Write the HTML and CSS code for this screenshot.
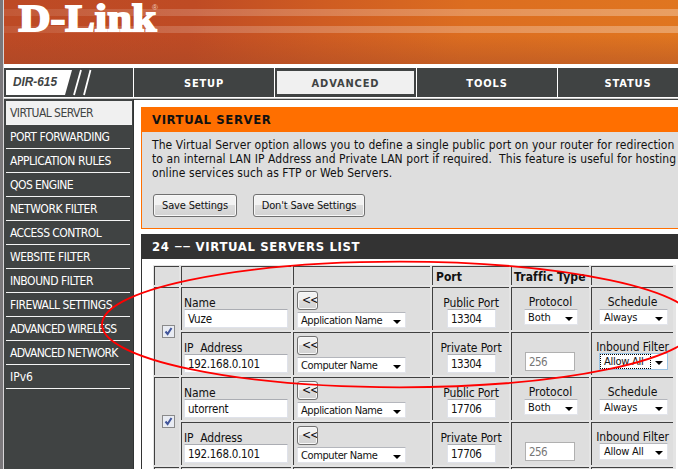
FILE: index.html
```html
<!DOCTYPE html>
<html lang="en">
<head>
<meta charset="utf-8">
<title>D-Link Virtual Server</title>
<link rel="stylesheet" href="styles.css">
</head>
<body>
<div class="page">
  <header class="banner">
    <svg class="logo" width="674" height="64" viewBox="4 0 674 64">
      <defs>
        <linearGradient id="stripe" x1="0" x2="1" y1="0" y2="0"><stop offset="0" stop-color="#fff" stop-opacity=".08"/><stop offset=".3" stop-color="#fff" stop-opacity=".19"/><stop offset="1" stop-color="#fff" stop-opacity=".3"/></linearGradient>
      </defs>
      <rect x="4" y="9" width="674" height="7" fill="url(#stripe)"/>
      <rect x="4" y="26" width="674" height="7" fill="url(#stripe)"/>
      <text class="brand" x="18.5" y="31.2" textLength="138" lengthAdjust="spacingAndGlyphs">D-Link</text>
      <text class="reg" x="152" y="9.5">®</text>
    </svg>
  </header>
  <nav class="tabs">
    <div class="model">
      <svg width="129" height="29" viewBox="0 0 129 29">
        <path d="M2 2H68L61 27H2Z" fill="#fff"/>
        <path d="M77 2L70 27M86.5 2L80 27" stroke="#fff" stroke-width="1.8"/>
        <text class="model-name" x="9" y="17.5" textLength="44" lengthAdjust="spacingAndGlyphs">DIR-615</text>
      </svg>
    </div>
    <a class="tab">SETUP</a>
    <a class="tab tab-on"><span>ADVANCED</span></a>
    <a class="tab tools">TOOLS</a>
    <a class="tab">STATUS</a>
  </nav>
  <div class="body">
    <aside class="side">
      <a class="on tight">VIRTUAL SERVER</a>
      <a>PORT FORWARDING</a>
      <a>APPLICATION RULES</a>
      <a class="tight">QOS ENGINE</a>
      <a>NETWORK FILTER</a>
      <a class="tight">ACCESS CONTROL</a>
      <a>WEBSITE FILTER</a>
      <a>INBOUND FILTER</a>
      <a>FIREWALL SETTINGS</a>
      <a class="tighter">ADVANCED WIRELESS</a>
      <a class="tighter">ADVANCED NETWORK</a>
      <a class="loose">IPv6</a>
    </aside>
    <main class="main">
      <section class="intro">
        <h1>VIRTUAL SERVER</h1>
        <p>The Virtual Server option allows you to define a single public port on your router for redirection<br>to an internal LAN IP Address and Private LAN port if required. &nbsp;This feature is useful for hosting<br>online services such as FTP or Web Servers.</p>
        <div class="actions"><button class="save">Save Settings</button><button class="dont">Don't Save Settings</button></div>
      </section>
      <section class="list">
        <h2>24 <span class="dash">––</span> VIRTUAL SERVERS LIST</h2>
        <div class="grid">
          <div class="cell"></div><div class="cell"></div><div class="cell"></div>
          <div class="cell head">Port</div><div class="cell head traffic">Traffic Type</div><div class="cell"></div>

          <div class="cell check"><i class="box"><svg width="9" height="9" viewBox="0 0 9 9"><path d="M1.5 4.5L3.6 7L7.5 1" fill="none" stroke="#41559b" stroke-width="2"/></svg></i></div>
          <div class="cell"><label>Name</label><div class="input">Vuze</div></div>
          <div class="cell pick"><button>&lt;&lt;</button><div class="select">Application Name</div></div>
          <div class="cell mid port"><label>Public Port</label><div class="input">13304</div></div>
          <div class="cell mid proto"><label>Protocol</label><div class="select">Both</div></div>
          <div class="cell mid sched"><label>Schedule</label><div class="select">Always</div></div>
          <div class="cell"><label class="ip">IP&nbsp; Address</label><div class="input num">192.168.0.101</div></div>
          <div class="cell pick"><button>&lt;&lt;</button><div class="select comp">Computer Name</div></div>
          <div class="cell mid port"><label>Private Port</label><div class="input">13304</div></div>
          <div class="cell mid number"><div class="input off">256</div></div>
          <div class="cell mid filter"><label>Inbound Filter</label><div class="select focus"><span>Allow All</span></div></div>

          <div class="cell check"><i class="box"><svg width="9" height="9" viewBox="0 0 9 9"><path d="M1.5 4.5L3.6 7L7.5 1" fill="none" stroke="#41559b" stroke-width="2"/></svg></i></div>
          <div class="cell"><label>Name</label><div class="input">utorrent</div></div>
          <div class="cell pick"><button>&lt;&lt;</button><div class="select">Application Name</div></div>
          <div class="cell mid port"><label>Public Port</label><div class="input">17706</div></div>
          <div class="cell mid proto"><label>Protocol</label><div class="select">Both</div></div>
          <div class="cell mid sched"><label>Schedule</label><div class="select">Always</div></div>
          <div class="cell"><label class="ip">IP&nbsp; Address</label><div class="input num">192.168.0.101</div></div>
          <div class="cell pick"><button>&lt;&lt;</button><div class="select comp">Computer Name</div></div>
          <div class="cell mid port"><label>Private Port</label><div class="input">17706</div></div>
          <div class="cell mid number"><div class="input off">256</div></div>
          <div class="cell mid filter"><label>Inbound Filter</label><div class="select"><span>Allow All</span></div></div>

          <div class="cell"></div><div class="cell"></div><div class="cell"></div><div class="cell"></div><div class="cell"></div><div class="cell"></div>
        </div>
      </section>
    </main>
  </div>
  <svg class="mark" width="678" height="469" viewBox="0 0 678 469"><ellipse cx="399.5" cy="324.5" rx="297.5" ry="62.8" fill="none" stroke="#f00" stroke-width="1.8"/></svg>
</div>
</body>
</html>
```
FILE: styles.css
```css
* { box-sizing: border-box; }
body { margin: 0; background: #fff; }
.page {
  position: relative; width: 678px; height: 469px; overflow: hidden;
  border-left: 3px solid #7b787b; padding-left: 1px;
  background: linear-gradient(90deg, #d8d6d8 1px, #fff 1px);
  font-family: "DejaVu Sans Condensed", "DejaVu Sans", sans-serif; font-stretch: condensed;
  font-size: 12px; color: #111;
}
.banner {
  height: 64px;
  background:
    linear-gradient(180deg, rgba(160,70,40,0) 55%, rgba(160,70,40,.4) 100%),
    linear-gradient(98deg, #bd4a25 0%, #bf4b24 28%, #cf5c22 47%, #dc6d20 68%, #e07620 100%);
}
.logo { display: block; }
.brand { font: bold 38px "Liberation Serif", serif; fill: #fff; stroke: #fff; stroke-width: 1.8px; }
.reg { font: 8px "Liberation Sans", sans-serif; fill: #f0cdbd; }
.tabs {
  display: grid; grid-template-columns: 129px 140px 141px 140px 140px; column-gap: 1px;
  height: 29px; margin-top: 4px;
}
.model, .tab { background: #404343; }
.model svg { display: block; }
.model-name { font: italic bold 12px "Liberation Sans", sans-serif; fill: #404343; }
.tab {
  display: flex; align-items: center; justify-content: center;
  font-weight: bold; font-size: 11px; letter-spacing: .85px; color: #fff; padding-top: 1px;
}
.tab-on { padding: 3px 2px; color: #404343; }
.tab-on span { flex: 1; height: 23px; line-height: 25px; background: #f0f0f0; text-align: center; }
.body {
  display: flex; height: 372px; margin-top: 1px; border-top: 1px solid #c8c8c8;
  background: linear-gradient(#404343 1px, transparent 1px);
}
.side { width: 130px; background: #404343; padding: 2px 3px 0 2px; border-right: 1px solid #303333; }
.side a { display: block; height: 24px; border-bottom: 1px solid #f4f4f4; color: #fff; line-height: 25px; padding-left: 4px; white-space: nowrap; letter-spacing: -.45px; }
.side .on { background: #f0f0f0; color: #404343; margin-right: -2px; }
.side .tight { letter-spacing: -.55px; }
.side .tighter { letter-spacing: -.7px; }
.side .loose { letter-spacing: 0; }
.main { flex: 1; padding: 8px 0 0 7px; min-width: 0; }
.intro { height: 122px; width: 600px; border: 1px solid #ff6f00; background: #dedede; }
h1, h2 { margin: 0; height: 25px; padding-left: 10px; font-weight: bold; font-size: 13px; line-height: 26px; letter-spacing: .6px; white-space: nowrap; }
h1 { background: #ff6f00; color: #111; margin-top: -1px; }
p { margin: 6px 0 0 10px; line-height: 14px; white-space: nowrap; letter-spacing: .08px; }
.actions { display: flex; gap: 16px; margin: 14px 0 0 11px; }
button {
  height: 23px; padding: 0; border: 1px solid #707070; border-radius: 3px; color: #111;
  background: linear-gradient(#f2f2f2 0 48%, #dcdcdc 50%, #d2d2d2);
  box-shadow: inset 0 0 0 1px #f8f8f8; font: inherit; font-size: 11px; letter-spacing: -.17px; white-space: nowrap;
}
.save { width: 84px; }
.dont { width: 112px; }
.list { width: 600px; height: 300px; margin-top: 5px; border-left: 1px solid #333; }
h2 { background: #333; color: #fff; letter-spacing: .65px; }
.dash { font-weight: normal; font-size: 18px; line-height: 0; letter-spacing: .2px; }
.grid {
  display: grid; grid-template-columns: 27px 112px 139px 79px 80px 84px;
  grid-template-rows: 21px repeat(4, 45px) 21px;
  width: 523px; margin: 6px 0 0 11px; padding: 1px; background: #e4e4e4;
}
.cell {
  border-top: 1px solid #404040; border-left: 1px solid #404040;
  margin: 0 2px 2px 0; background: #dedede; padding: 8px 0 0 2px;
  white-space: nowrap; overflow: hidden;
}
.head { font-weight: bold; padding: 1px 0 0 3px; line-height: 18px; }
.traffic { letter-spacing: .15px; padding-left: 2px; }
.check { grid-row: span 2; padding: 37px 0 0 7px; }
.box { display: block; width: 13px; height: 13px; border: 1px solid #8a8a8a; background: #e9ecf3; padding: 1px; }
.box svg { display: block; }
label { display: block; height: 13px; line-height: 14px; letter-spacing: -.1px; }
.input {
  width: 104px; height: 19px; padding-left: 3px; line-height: 18px; font-size: 11.5px; letter-spacing: -.2px;
  border: 1px solid #dfe2ea; border-top-color: #abadb3; background: #fff;
}
.num { letter-spacing: -.3px; }
.pick { padding: 3px 0 0 3px; }
.pick button { display: block; width: 21px; height: 19px; font-size: 12px; letter-spacing: -1px; line-height: 17px; padding-left: 4px; text-align: left; overflow: hidden; }
.select {
  position: relative; height: 16px; width: 109px; line-height: 15px; padding-left: 3px;
  margin-top: 2px; background: #fff; border: 1px solid #e2e4ea; border-top-color: #b4b6bc; font-size: 11px;
  letter-spacing: -.4px;
}
.select::after {
  content: ""; position: absolute; right: 4px; top: 7px;
  border: 4px solid transparent; border-top-color: #000; border-bottom: 0;
}
.mid { padding: 8px 0 0; text-align: center; }
.mid .input, .mid .select { text-align: left; }
.port .input { width: 49px; margin-left: 14px; letter-spacing: -.5px; }
.proto, .sched { padding-top: 7px; }
.proto label, .sched label { height: 14px; letter-spacing: 0; }
.proto .select { width: 54px; margin: 0 0 0 12px; padding-left: 3px; letter-spacing: -.1px; }
.sched .select, .filter .select { width: 69px; margin: 0 0 0 7px; padding-left: 4px; letter-spacing: -.25px; }
.filter { padding-top: 7px; }
.filter .select { height: 17px; }
.filter .focus { border: 1px solid #9cc4e4; padding-left: 0; }
.focus span { display: block; width: 51px; height: 15px; line-height: 13px; padding-left: 3px; border: 1px dotted #000; }
.number { padding-top: 19px; }
.number .input { width: 50px; margin-left: 13px; border: 1px solid #b0b0b0; color: #777; letter-spacing: -.6px; }
.mark { position: absolute; left: 0; top: 0; margin-left: -3px; pointer-events: none; }
```
